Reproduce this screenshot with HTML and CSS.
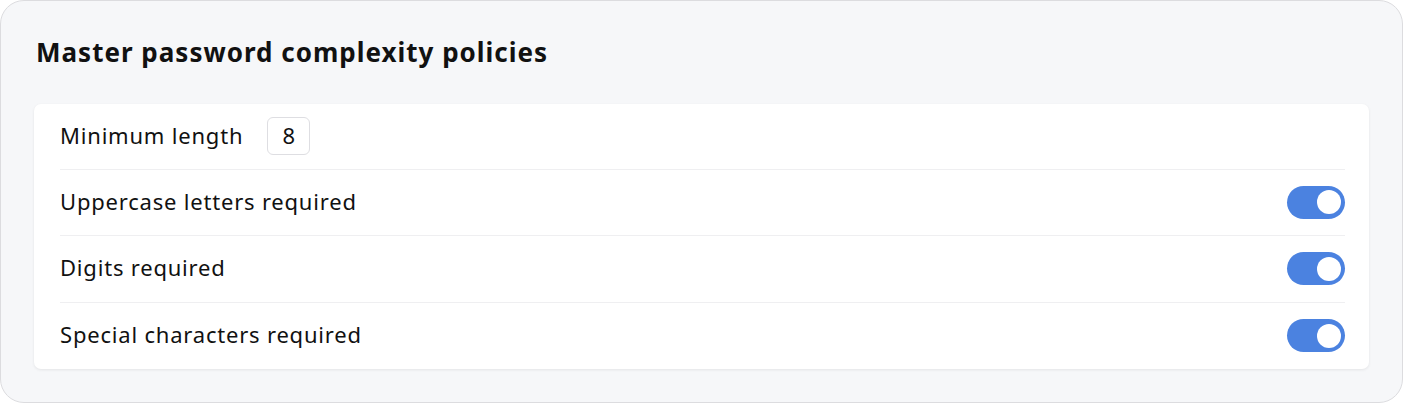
FILE: index.html
```html
<!DOCTYPE html>
<html>
<head>
<meta charset="UTF-8">
<link rel="stylesheet" href="styles.css">
</head>
<body>
<div class="panel">
  <h2 class="title">Master password complexity policies</h2>
  <div class="card">
    <div class="row">
      <span class="label">Minimum length</span>
      <input type="text" class="qty" value="8" />
    </div>
    <div class="row">
      <span class="label">Uppercase letters required</span>
      <label class="switch"><input type="checkbox" checked><span class="slider"></span></label>
    </div>
    <div class="row">
      <span class="label">Digits required</span>
      <label class="switch"><input type="checkbox" checked><span class="slider"></span></label>
    </div>
    <div class="row">
      <span class="label">Special characters required</span>
      <label class="switch"><input type="checkbox" checked><span class="slider"></span></label>
    </div>
  </div>
</div>
</body>
</html>
```

FILE: styles.css
```css
body{margin:0;font-family:'Noto Sans',sans-serif;color:#111}
.panel{background:#f6f7f9;border:1px solid #dcdcdf;border-radius:24px;height:403px;box-sizing:border-box;padding:31px 33px 0}
.title{margin:0 0 32px 2px;font-size:26px;font-weight:700;line-height:40px;letter-spacing:1px}
.card{background:#fff;border-radius:7px;box-shadow:0 1px 3px rgba(0,0,0,.08);padding:0 24px 0 26px}
.row{display:flex;align-items:center;justify-content:space-between;height:66.5px;border-bottom:1px solid #efeff1;box-sizing:border-box}
.row:last-child{border-bottom:0}
.row:first-child{justify-content:flex-start;height:65.5px}
.label{font-size:22px;letter-spacing:.8px;padding-bottom:3px}
.qty{width:43px;height:38px;box-sizing:border-box;border:1px solid #dedee2;border-radius:6px;margin-left:24px;text-align:center;font-family:inherit;font-size:22px;color:#111;outline:none;padding:0 0 2px}
.switch{position:relative;display:inline-block;width:58px;height:33px}
.switch input{opacity:0;width:0;height:0}
.slider{position:absolute;top:0;left:0;right:0;bottom:0;background:#4b82e0;border-radius:17px;cursor:pointer}
.slider:before{position:absolute;content:"";width:24px;height:24px;right:4px;top:4.5px;background:#fff;border-radius:50%}
```
